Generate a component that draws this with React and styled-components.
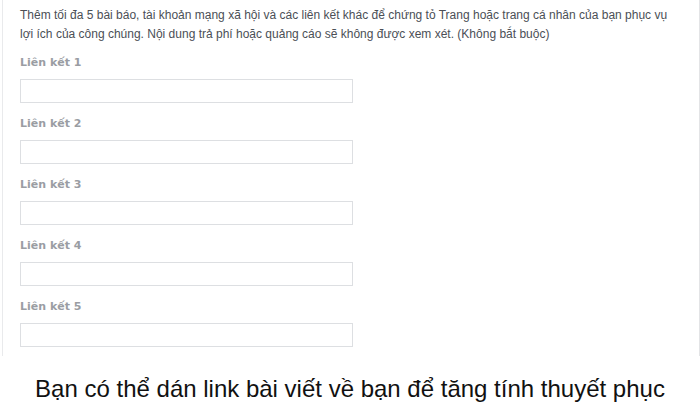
import React from 'react';
import styled, { createGlobalStyle } from 'styled-components';

const GlobalStyle = createGlobalStyle`
  html, body {
    margin: 0;
    padding: 0;
    background: #ffffff;
  }
`;

const Page = styled.div`
  width: 700px;
  height: 417px;
  display: flex;
  flex-direction: column;
  overflow: hidden;
`;

const Panel = styled.div`
  box-sizing: border-box;
  height: 356px;
  margin: 0 0 0 2px;
  padding: 6px 0 0 17px;
  border-left: 1px solid #e9eaec;
  border-right: 1px solid #e3e4e6;
  font-family: 'Liberation Sans', Arial, sans-serif;
`;

const Description = styled.p`
  margin: 0 0 11px;
  width: 660px;
  font-size: 12px;
  line-height: 19px;
  color: #4b4f56;
`;

const Field = styled.div`
  display: flex;
  flex-direction: column;
  margin-bottom: 13px;
`;

const Label = styled.label`
  font-family: 'DejaVu Sans', sans-serif;
  font-size: 11px;
  font-weight: bold;
  color: #9a9da3;
  line-height: 16px;
  margin-bottom: 8px;
`;

const Input = styled.input`
  box-sizing: border-box;
  width: 333px;
  height: 24px;
  border: 1px solid #dddfe2;
  border-radius: 0;
  background: #fff;
  outline: none;
  padding: 0 6px;
`;

const Caption = styled.div`
  flex: 1;
  display: flex;
  align-items: center;
  justify-content: center;
  padding-top: 4px;
  font-family: 'Liberation Sans', Arial, sans-serif;
  font-size: 24px;
  color: #111111;
`;

const links = [1, 2, 3, 4, 5];

export default function App() {
  return (
    <Page>
      <GlobalStyle />
      <Panel>
        <Description>
          Thêm tối đa 5 bài báo, tài khoản mạng xã hội và các liên kết khác để chứng tỏ Trang hoặc trang cá nhân của bạn phục vụ
          lợi ích của công chúng. Nội dung trả phí hoặc quảng cáo sẽ không được xem xét. (Không bắt buộc)
        </Description>
        {links.map((n) => (
          <Field key={n}>
            <Label htmlFor={`link${n}`}>Liên kết {n}</Label>
            <Input id={`link${n}`} type="text" />
          </Field>
        ))}
      </Panel>
      <Caption>Bạn có thể dán link bài viết về bạn để tăng tính thuyết phục</Caption>
    </Page>
  );
}
